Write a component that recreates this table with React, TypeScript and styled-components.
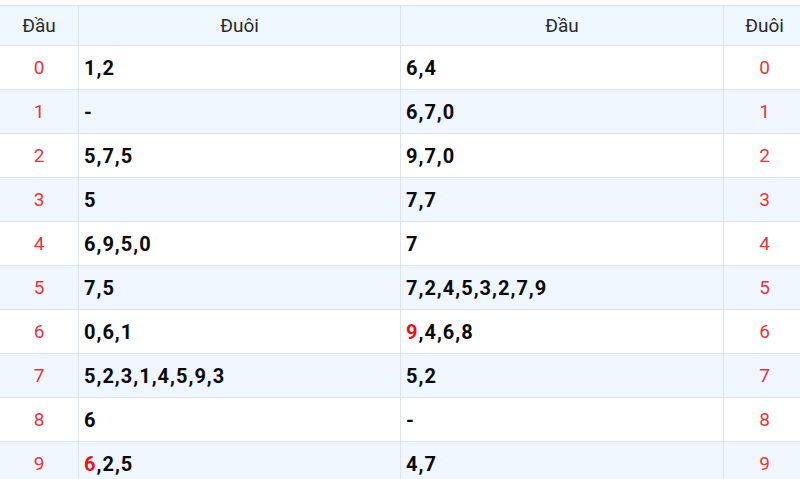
import React from "react";
import styled, { createGlobalStyle } from "styled-components";

const Global = createGlobalStyle`
  html, body { margin: 0; padding: 0; background: #fff; }
  body { font-family: Roboto, "Noto Sans", Arial, sans-serif; }
`;

const Wrap = styled.div`
  padding-top: 5px;
  width: 800px;
  overflow: hidden;
`;

const Table = styled.table`
  width: 802px;
  margin-left: -1px;
  border-collapse: collapse;
  table-layout: fixed;
`;

const HeadCell = styled.th<{ $w: number }>`
  width: ${(p) => p.$w}px;
  height: 39px;
  padding: 0;
  background: #eef6fe;
  border: 1px solid #dde3ea;
  font-weight: 400;
  font-size: 19px;
  color: #2a2a2a;
  text-align: center;
`;

const Row = styled.tr<{ $alt: boolean }>`
  background: ${(p) => (p.$alt ? "#eff6fe" : "#ffffff")};
`;

const NumCell = styled.td`
  height: 43px;
  padding: 0;
  border: 1px solid #dde3ea;
  text-align: center;
  color: #f0323c;
  font-size: 19px;
`;

const ValCell = styled.td`
  height: 43px;
  padding: 0 0 0 5px;
  border: 1px solid #dde3ea;
  text-align: left;
  color: #0a0a0a;
  font-size: 20px;
  font-weight: 700;
  letter-spacing: 1px;
`;

const Hot = styled.span`
  color: #e8121c;
`;

type V = { hot?: boolean; text: string };
const rows: { n: string; a: V[]; b: V[] }[] = [
  { n: "0", a: [{ text: "1,2" }], b: [{ text: "6,4" }] },
  { n: "1", a: [{ text: "-" }], b: [{ text: "6,7,0" }] },
  { n: "2", a: [{ text: "5,7,5" }], b: [{ text: "9,7,0" }] },
  { n: "3", a: [{ text: "5" }], b: [{ text: "7,7" }] },
  { n: "4", a: [{ text: "6,9,5,0" }], b: [{ text: "7" }] },
  { n: "5", a: [{ text: "7,5" }], b: [{ text: "7,2,4,5,3,2,7,9" }] },
  { n: "6", a: [{ text: "0,6,1" }], b: [{ hot: true, text: "9" }, { text: ",4,6,8" }] },
  { n: "7", a: [{ text: "5,2,3,1,4,5,9,3" }], b: [{ text: "5,2" }] },
  { n: "8", a: [{ text: "6" }], b: [{ text: "-" }] },
  { n: "9", a: [{ hot: true, text: "6" }, { text: ",2,5" }], b: [{ text: "4,7" }] },
];

const render = (v: V[]) =>
  v.map((p, i) => (p.hot ? <Hot key={i}>{p.text}</Hot> : <React.Fragment key={i}>{p.text}</React.Fragment>));

export default function App() {
  return (
    <Wrap>
      <Global />
      <Table>
        <thead>
          <tr>
            <HeadCell $w={78}>Đầu</HeadCell>
            <HeadCell $w={321}>Đuôi</HeadCell>
            <HeadCell $w={322}>Đầu</HeadCell>
            <HeadCell $w={81}>Đuôi</HeadCell>
          </tr>
        </thead>
        <tbody>
          {rows.map((r, i) => (
            <Row key={r.n} $alt={i % 2 === 1}>
              <NumCell>{r.n}</NumCell>
              <ValCell>{render(r.a)}</ValCell>
              <ValCell>{render(r.b)}</ValCell>
              <NumCell>{r.n}</NumCell>
            </Row>
          ))}
        </tbody>
      </Table>
    </Wrap>
  );
}
